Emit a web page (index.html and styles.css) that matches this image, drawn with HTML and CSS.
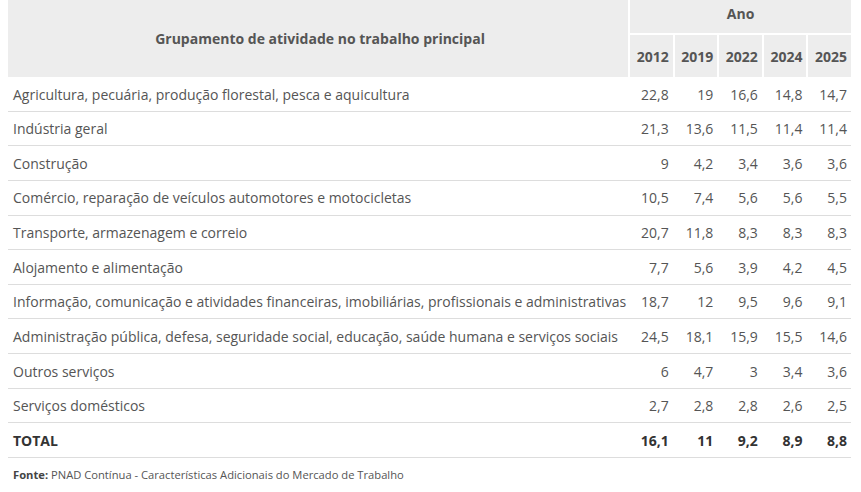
FILE: index.html
```html
<!DOCTYPE html>
<html lang="pt-BR">
<head>
<meta charset="utf-8">
<link rel="stylesheet" href="styles.css">
</head>
<body>
<div class="wrap">
<table class="data">
  <thead>
    <tr class="h1">
      <th class="grp" rowspan="2">Grupamento de atividade no trabalho principal</th>
      <th class="ano" colspan="5">Ano</th>
    </tr>
    <tr class="h2">
      <th class="yr">2012</th><th class="yr">2019</th><th class="yr">2022</th><th class="yr">2024</th><th class="yr">2025</th>
    </tr>
  </thead>
  <tbody>
    <tr><td class="lbl">Agricultura, pecuária, produção florestal, pesca e aquicultura</td><td>22,8</td><td>19</td><td>16,6</td><td>14,8</td><td>14,7</td></tr>
    <tr><td class="lbl">Indústria geral</td><td>21,3</td><td>13,6</td><td>11,5</td><td>11,4</td><td>11,4</td></tr>
    <tr><td class="lbl">Construção</td><td>9</td><td>4,2</td><td>3,4</td><td>3,6</td><td>3,6</td></tr>
    <tr><td class="lbl">Comércio, reparação de veículos automotores e motocicletas</td><td>10,5</td><td>7,4</td><td>5,6</td><td>5,6</td><td>5,5</td></tr>
    <tr><td class="lbl">Transporte, armazenagem e correio</td><td>20,7</td><td>11,8</td><td>8,3</td><td>8,3</td><td>8,3</td></tr>
    <tr><td class="lbl">Alojamento e alimentação</td><td>7,7</td><td>5,6</td><td>3,9</td><td>4,2</td><td>4,5</td></tr>
    <tr><td class="lbl">Informação, comunicação e atividades financeiras, imobiliárias, profissionais e administrativas</td><td>18,7</td><td>12</td><td>9,5</td><td>9,6</td><td>9,1</td></tr>
    <tr><td class="lbl">Administração pública, defesa, seguridade social, educação, saúde humana e serviços sociais</td><td>24,5</td><td>18,1</td><td>15,9</td><td>15,5</td><td>14,6</td></tr>
    <tr><td class="lbl">Outros serviços</td><td>6</td><td>4,7</td><td>3</td><td>3,4</td><td>3,6</td></tr>
    <tr><td class="lbl">Serviços domésticos</td><td>2,7</td><td>2,8</td><td>2,8</td><td>2,6</td><td>2,5</td></tr>
    <tr class="total"><td class="lbl">TOTAL</td><td>16,1</td><td>11</td><td>9,2</td><td>8,9</td><td>8,8</td></tr>
  </tbody>
</table>
<p class="source"><strong>Fonte:</strong> PNAD Contínua - Características Adicionais do Mercado de Trabalho</p>
</div>
</body>
</html>
```

FILE: styles.css
```css
html, body {
  margin: 0;
  padding: 0;
  background: #fff;
}
body {
  font-family: "Open Sans", "Liberation Sans", sans-serif;
  color: #555;
}
.wrap {
  padding: 0 10px 0 8px;
}
.data {
  width: 843px;
  border-collapse: separate;
  border-spacing: 0;
  font-size: 14px;
}
.data th {
  background: #ededed;
  color: #555;
  font-weight: 700;
  font-size: 14px;
  padding: 0 4px;
}
.data th.grp {
  text-align: center;
  border-right: 2px solid #fff;
  padding-left: 8px;
}
.data th.ano {
  border-bottom: 2px solid #fff;
  text-align: center;
  vertical-align: middle;
  padding-bottom: 6px;
  box-sizing: border-box;
}
.data .h1 th.ano { height: 35px; }
.data th.yr {
  height: 41px;
  width: 42px;
  text-align: right;
  border-left: 2px solid #fff;
  padding: 1px 4px 0 0;
}
.data th.yr:first-child { border-left: 0; }
.data td {
  padding: 7.5px 4px 6.5px 0;
  line-height: 19.64px;
  text-align: right;
  border-bottom: 1px solid #ddd;
  white-space: nowrap;
  color: #555;
}
.data td.lbl {
  text-align: left;
  padding-left: 5px;
}
.data tr.total td {
  font-weight: 700;
  color: #333;
}
.source {
  margin: 9px 0 0 5px;
  font-size: 11.2px;
  color: #555;
}
.source strong {
  color: #444;
}
```
